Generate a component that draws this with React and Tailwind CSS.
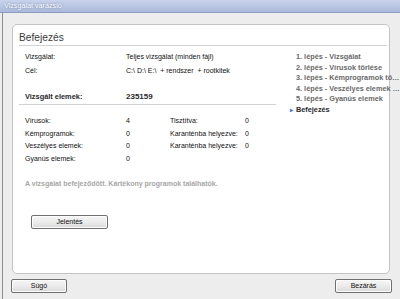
const steps = [
  "1. lépés - Vizsgálat",
  "2. lépés - Vírusok törlése",
  "3. lépés - Kémprogramok törlése",
  "4. lépés - Veszélyes elemek törlése",
  "5. lépés - Gyanús elemek",
];

const stats = [
  ["Vírusok:", "4", "Tisztítva:", "0"],
  ["Kémprogramok:", "0", "Karanténba helyezve:", "0"],
  ["Veszélyes elemek:", "0", "Karanténba helyezve:", "0"],
  ["Gyanús elemek:", "0", "", ""],
];

function Button({ children, className = "" }) {
  return (
    <button
      className={
        "h-[14px] rounded-[2px] border border-[#707070] bg-gradient-to-b from-[#f6f6f6] via-[#ebebeb] to-[#d9d9d9] text-[7px] leading-[12px] text-[#111] shadow-[inset_0_0_0_1px_#fcfcfc] " +
        className
      }
    >
      {children}
    </button>
  );
}

export default function App() {
  return (
    <div className="w-[400px] h-[299px] flex flex-col overflow-hidden bg-[#ededed] font-['Liberation_Sans',Arial,sans-serif]">
      {/* title bar */}
      <div className="h-[13px] shrink-0 border-b border-[#8f9cbd] bg-gradient-to-b from-[#c9d3ec] to-[#abb9db] pl-[4px] text-[7.2px] leading-[12px] text-white [text-shadow:0_0_2px_#5f6f98]">
        Vizsgálat varázsló
      </div>

      <div className="flex-1 flex flex-col ml-[2px] border-l border-[#8d8d8d] pl-[9px] pr-[10px] pt-[11px]">
        {/* panel */}
        <div className="h-[250px] shrink-0 rounded-[5px] border border-[#c4c4c4] bg-white">
          <div className="ml-[6px] mr-[2px] h-[21px] flex items-end border-b border-[#d2d2d2] pb-[1px] text-[10.2px] leading-[12px] text-[#3a3a3a]">
            Befejezés
          </div>

          <div className="flex">
            {/* left */}
            <div className="w-[265px] shrink-0">
              <div className="pl-[12px] pt-[5px] text-[7px] leading-[12px] text-[#111]">
                <div className="flex h-[12px]">
                  <span className="w-[101px]">Vizsgálat:</span>
                  <span>Teljes vizsgálat (minden fájl)</span>
                </div>
                <div className="flex h-[12px] mt-[2px]">
                  <span className="w-[101px]">Cél:</span>
                  <span>C:\ D:\ E:\&nbsp; + rendszer&nbsp; + rootkitek</span>
                </div>
                <div className="flex h-[12px] mt-[14px] font-bold text-[#2a2a2a]">
                  <span className="w-[101px] text-[7.4px]">Vizsgált elemek:</span>
                  <span className="text-[8px]">235159</span>
                </div>
              </div>
              <div className="ml-[6px] mr-[2px] mt-[1px] border-b border-[#d2d2d2]"></div>

              <div className="pl-[12px] pt-[10px] text-[7px] leading-[12.5px] text-[#111]">
                {stats.map((r, i) => (
                  <div key={i} className="flex h-[12.5px]">
                    <span className="w-[101px]">{r[0]}</span>
                    <span className="w-[44px]">{r[1]}</span>
                    <span className="w-[75px]">{r[2]}</span>
                    <span>{r[3]}</span>
                  </div>
                ))}
              </div>

              <div className="pl-[12px] mt-[13px] text-[7px] leading-[12px] font-bold text-[#a6a6a6] whitespace-nowrap">
                A vizsgálat befejeződött. Kártékony programok találhatók.
              </div>

              <div className="pl-[18px] mt-[17px]">
                <Button className="w-[77px]">Jelentés</Button>
              </div>
            </div>

            {/* steps */}
            <div className="pt-[6px] pl-[12px] text-[7.3px] leading-[10.6px] font-bold">
              {steps.map((s) => (
                <div key={s} className="pl-[6px] w-[111px] truncate text-[#696969]">
                  {s}
                </div>
              ))}
              <div className="flex items-center text-[#2a2a2a]">
                <span className="w-[6px] text-[6px] text-[#2f6de0]">▸</span>
                <span>Befejezés</span>
              </div>
            </div>
          </div>
        </div>

        {/* bottom buttons */}
        <div className="mt-[5px] flex justify-between -ml-[1px] -mr-[2px]">
          <Button className="w-[56px]">Súgó</Button>
          <Button className="w-[57px]">Bezárás</Button>
        </div>
      </div>
    </div>
  );
}
